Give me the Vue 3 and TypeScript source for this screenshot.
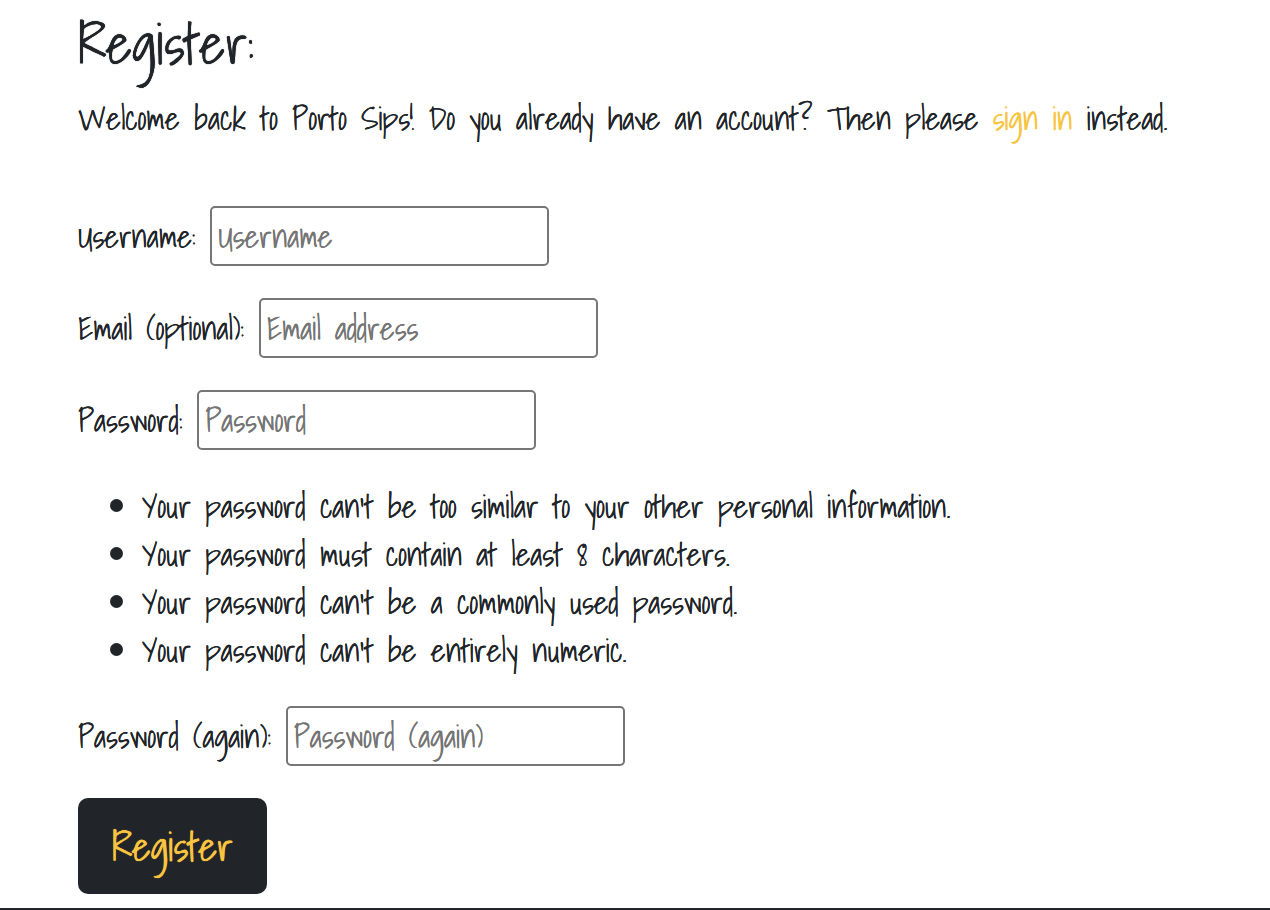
<script setup lang="ts">
import { ref } from 'vue'

interface Field {
  id: string
  label: string
  placeholder: string
  type: string
  rules?: string[]
}

const fields: Field[] = [
  { id: 'username', label: 'Username:', placeholder: 'Username', type: 'text' },
  { id: 'email', label: 'Email (optional):', placeholder: 'Email address', type: 'email' },
  {
    id: 'password1',
    label: 'Password:',
    placeholder: 'Password',
    type: 'password',
    rules: [
      "Your password can't be too similar to your other personal information.",
      'Your password must contain at least 8 characters.',
      "Your password can't be a commonly used password.",
      "Your password can't be entirely numeric.",
    ],
  },
  { id: 'password2', label: 'Password (again):', placeholder: 'Password (again)', type: 'password' },
]

const values = ref<Record<string, string>>({ username: '', email: '', password1: '', password2: '' })
</script>

<template>
  <div class="page">
    <main class="content">
      <h1>Register:</h1>
      <p class="intro">
        Welcome back to Porto Sips! Do you already have an account? Then please
        <a href="#signin">sign in</a> instead.
      </p>
      <form @submit.prevent>
        <template v-for="field in fields" :key="field.id">
          <div class="field">
            <label :for="field.id">{{ field.label + ' ' }}</label>
            <input
              :id="field.id"
              v-model="values[field.id]"
              :type="field.type"
              :placeholder="field.placeholder"
            />
          </div>
          <ul v-if="field.rules" class="rules">
            <li v-for="rule in field.rules" :key="rule">{{ rule }}</li>
          </ul>
        </template>
        <button type="submit">Register</button>
      </form>
    </main>
    <footer></footer>
  </div>
</template>

<style>
body {
  margin: 0;
  background: #fff;
}
</style>

<style scoped>
.page {
  color: #212529;
  font-family: 'Shadows Into Light', 'Liberation Sans Narrow', 'Liberation Sans', sans-serif;
  font-size: 32px;
  line-height: 48px;
  text-rendering: geometricPrecision;
  text-shadow: 0 0 0 currentColor;
}
.content {
  padding: 0 78px 14px;
}
h1 {
  margin: 0;
  padding: 12px 0 18px;
  font-size: 56px;
  font-weight: 500;
  line-height: 64px;
  text-shadow: 0 0 0 currentColor, 0 0 1px currentColor;
}
.intro {
  margin: 0 0 64px;
}
a {
  color: #f9c440;
  text-decoration: none;
  text-shadow: 0 0 0 currentColor;
}
.field {
  display: flex;
  align-items: center;
  margin-bottom: 32px;
}
label {
  white-space: pre;
}
input {
  box-sizing: border-box;
  width: 339px;
  height: 60px;
  padding: 0 6px;
  border: 2px solid #767676;
  border-radius: 5px;
  background: #fff;
  color: inherit;
  font: inherit;
  text-rendering: inherit;
}
input::placeholder {
  color: #757575;
  opacity: 1;
  text-shadow: 0 0 0 currentColor;
}
.rules {
  margin: 0 0 32px;
  padding-left: 64px;
}
button {
  display: block;
  padding: 17px 34px 15px;
  border: 0;
  border-radius: 10px;
  background: #212529;
  color: #f9c440;
  font-family: inherit;
  font-size: 40px;
  font-weight: 500;
  line-height: 64px;
  text-rendering: inherit;
  text-shadow: 0 0 0 currentColor, 0 0 1px currentColor;
}
footer {
  border-top: 2px solid #212529;
}
</style>
